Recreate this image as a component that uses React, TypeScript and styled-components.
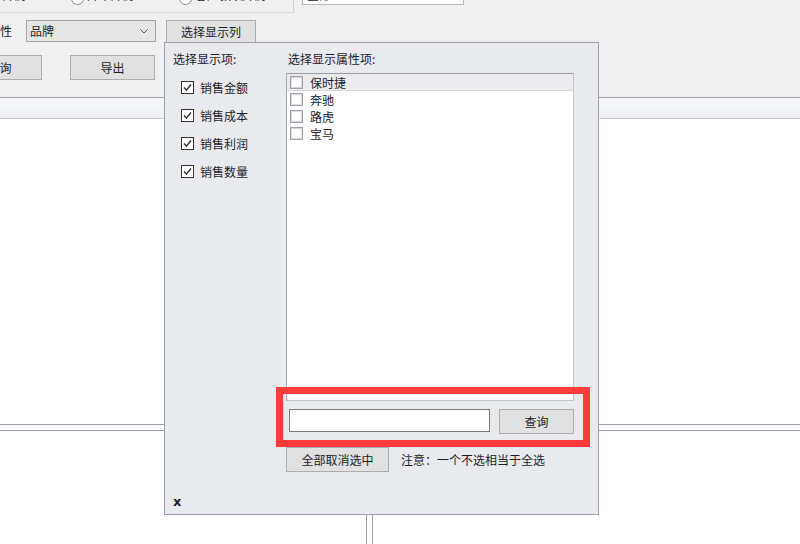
import type { FC } from "react";
import styled, { createGlobalStyle } from "styled-components";

const GlobalStyle = createGlobalStyle`
  html, body {
    margin: 0;
    padding: 0;
    background: #ffffff;
  }
  body {
    font-family: "Noto Sans CJK SC", "Noto Sans", sans-serif;
    font-size: 12px;
    color: #1c1c28;
  }
`;

const metricItems = ["销售金额", "销售成本", "销售利润", "销售数量"];
const brandItems = ["保时捷", "奔驰", "路虎", "宝马"];

const CheckMark: FC = () => (
  <svg width="11" height="11" viewBox="0 0 11 11">
    <polyline points="2,5.5 4.5,8 9,2.5" fill="none" stroke="#2a2a2a" strokeWidth="1.3" />
  </svg>
);

const App: FC = () => {
  return (
    <Page>
      <GlobalStyle />
      <Toolbar>
        <TopRow>
          <GroupBox>
            <RadioText style={{ marginLeft: -9 }}>户库房</RadioText>
            <Radio />
            <RadioText>开单库房</RadioText>
            <Radio />
            <RadioText>客户款项库房</RadioText>
          </GroupBox>
          <TopInput>全部</TopInput>
        </TopRow>
        <FormRow>
          <FieldLabel>属性</FieldLabel>
          <Combo>
            品牌
            <Chevron viewBox="0 0 8 5" width="8" height="5">
              <polyline points="0.5,0.5 4,4 7.5,0.5" fill="none" stroke="#555" strokeWidth="1" />
            </Chevron>
          </Combo>
          <ToolButton $width={90}>选择显示列</ToolButton>
        </FormRow>
        <ButtonRow>
          <ActionButton style={{ marginLeft: -43 }}>查询</ActionButton>
          <ActionButton>导出</ActionButton>
        </ButtonRow>
      </Toolbar>
      <HeaderStrip />
      <TopPane />
      <BottomRow>
        <LeftPane />
        <RightPane />
      </BottomRow>

      <Popup>
        <PopupBody>
          <LeftCol>
            <Title>选择显示项:</Title>
            {metricItems.map((m) => (
              <MetricRow key={m}>
                <CheckBox>
                  <CheckMark />
                </CheckBox>
                {m}
              </MetricRow>
            ))}
          </LeftCol>
          <RightCol>
            <Title $indent>选择显示属性项:</Title>
            <ListBox>
              {brandItems.map((b, i) => (
                <ListItem key={b} $active={i === 0}>
                  <EmptyBox />
                  {b}
                </ListItem>
              ))}
            </ListBox>
            <SearchRow>
              <SearchInput />
              <ToolButton $width={75} $height={25} $gap={9}>
                查询
              </ToolButton>
            </SearchRow>
            <FooterRow>
              <ToolButton $width={103} $height={25} $gap={0}>
                全部取消选中
              </ToolButton>
              <Note>注意：一个不选相当于全选</Note>
            </FooterRow>
          </RightCol>
        </PopupBody>
        <Close>x</Close>
      </Popup>
      <Highlight />
    </Page>
  );
};

const Page = styled.div`
  position: relative;
  width: 800px;
  height: 544px;
  overflow: hidden;
  display: flex;
  flex-direction: column;
  background: #ffffff;
`;

const Toolbar = styled.div`
  height: 98px;
  box-sizing: border-box;
  background: #f0f0f0;
  border-bottom: 1px solid #a0a0ab;
`;

const TopRow = styled.div`
  display: flex;
  align-items: flex-end;
  height: 13px;
`;

const GroupBox = styled.div`
  width: 294px;
  height: 30px;
  margin-top: -17px;
  box-sizing: border-box;
  border-right: 1px solid #cfcfd4;
  border-bottom: 1px solid #dadade;
  display: flex;
  align-items: flex-start;
  overflow: hidden;
`;

const Radio = styled.span`
  width: 11px;
  height: 11px;
  border: 1px solid #8a8a8a;
  border-radius: 50%;
  background: #ffffff;
  margin: 9px 3px 0 44px;
  flex: none;
`;

const RadioText = styled.span`
  line-height: 16px;
  margin-top: 4px;
  white-space: nowrap;
`;

const TopInput = styled.div`
  width: 162px;
  height: 22px;
  margin-left: 8px;
  margin-bottom: 8px;
  box-sizing: border-box;
  border: 1px solid #b8b8c0;
  background: #ffffff;
  padding: 3px 4px;
  line-height: 16px;
`;

const FormRow = styled.div`
  display: flex;
  align-items: flex-start;
  margin-top: 7px;
  height: 23px;
`;

const FieldLabel = styled.span`
  margin-left: -12px;
  width: 38px;
  line-height: 22px;
  font-size: 12px;
`;

const Combo = styled.div`
  position: relative;
  width: 130px;
  height: 22px;
  box-sizing: border-box;
  border: 1px solid #a3a3a3;
  background: #e5e5e5;
  padding-left: 3px;
  line-height: 19px;
`;

const Chevron = styled.svg`
  position: absolute;
  right: 7px;
  top: 8px;
`;

const ToolButton = styled.div<{ $width: number; $height?: number; $gap?: number }>`
  width: ${(p) => p.$width}px;
  height: ${(p) => p.$height ?? 23}px;
  box-sizing: border-box;
  border: 1px solid #adadad;
  background: #e1e1e1;
  display: flex;
  align-items: center;
  justify-content: center;
  flex: none;
  margin-left: ${(p) => p.$gap ?? 10}px;
  white-space: nowrap;
`;

const ButtonRow = styled.div`
  display: flex;
  gap: 28px;
  margin-top: 12px;
`;

const ActionButton = styled.div`
  width: 85px;
  height: 25px;
  box-sizing: border-box;
  border: 1px solid #adadad;
  background: #e1e1e1;
  display: flex;
  align-items: center;
  justify-content: center;
`;

const HeaderStrip = styled.div`
  height: 21px;
  box-sizing: border-box;
  background: linear-gradient(#f6f7f9, #eff0f3);
  border-bottom: 1px solid #c6c6ce;
`;

const TopPane = styled.div`
  height: 306px;
  box-sizing: border-box;
  border-bottom: 1px solid #a0a0ab;
  margin-bottom: 5px;
`;

const BottomRow = styled.div`
  flex: 1;
  display: flex;
  gap: 5px;
  border-top: 1px solid #a0a0ab;
`;

const LeftPane = styled.div`
  width: 367px;
  box-sizing: border-box;
  border-right: 1px solid #a0a0ab;
`;

const RightPane = styled.div`
  flex: 1;
  border-left: 1px solid #a0a0ab;
`;

const Popup = styled.div`
  position: absolute;
  left: 164px;
  top: 42px;
  width: 435px;
  height: 473px;
  box-sizing: border-box;
  border: 1px solid #a0a0ab;
  background: #e9eaee;
  display: flex;
  flex-direction: column;
  padding: 8px 0 0 8px;
`;

const PopupBody = styled.div`
  display: flex;
`;

const LeftCol = styled.div`
  width: 113px;
  display: flex;
  flex-direction: column;
`;

const RightCol = styled.div`
  width: 288px;
  display: flex;
  flex-direction: column;
`;

const Title = styled.div<{ $indent?: boolean }>`
  line-height: 16px;
  height: 16px;
  margin-left: ${(p) => (p.$indent ? 2 : 0)}px;
  margin-bottom: 6px;
`;

const MetricRow = styled.div`
  display: flex;
  align-items: center;
  height: 28px;
  padding-left: 8px;
  &:first-of-type {
    margin-top: 1px;
  }
`;

const CheckBox = styled.span`
  width: 13px;
  height: 13px;
  box-sizing: border-box;
  border: 1px solid #333333;
  background: #ffffff;
  display: flex;
  align-items: center;
  justify-content: center;
  margin-right: 6px;
`;

const ListBox = styled.div`
  height: 328px;
  box-sizing: border-box;
  background: #ffffff;
  border: 1px solid #c4c4cc;
  border-top-color: #9c9ca6;
  border-left-color: #a8a8b2;
`;

const ListItem = styled.div<{ $active: boolean }>`
  display: flex;
  align-items: center;
  height: 17px;
  box-sizing: border-box;
  padding-left: 3px;
  background: ${(p) => (p.$active ? "#ececef" : "#ffffff")};
  border-bottom: 1px solid ${(p) => (p.$active ? "#d8d8dd" : "transparent")};
`;

const EmptyBox = styled.span`
  width: 13px;
  height: 13px;
  box-sizing: border-box;
  border: 1px solid #a0a0a8;
  box-shadow: inset 0 0 0 1px #dcdce0;
  background: #ffffff;
  margin-right: 7px;
`;

const SearchRow = styled.div`
  display: flex;
  align-items: flex-start;
  margin-top: 8px;
  padding-left: 3px;
`;

const SearchInput = styled.div`
  width: 202px;
  height: 23px;
  box-sizing: border-box;
  border: 1px solid #7a7a7a;
  background: #ffffff;
`;

const FooterRow = styled.div`
  display: flex;
  align-items: center;
  margin-top: 13px;
`;

const Note = styled.span`
  margin-left: 12px;
`;

const Close = styled.div`
  margin-top: auto;
  margin-bottom: 6px;
  font-weight: bold;
  font-size: 13px;
  line-height: 12px;
  font-family: "DejaVu Sans", sans-serif;
`;

const Highlight = styled.div`
  position: absolute;
  left: 276px;
  top: 387px;
  width: 314px;
  height: 60px;
  box-sizing: border-box;
  border: 7px solid #ff3b3b;
  pointer-events: none;
`;

export default App;
